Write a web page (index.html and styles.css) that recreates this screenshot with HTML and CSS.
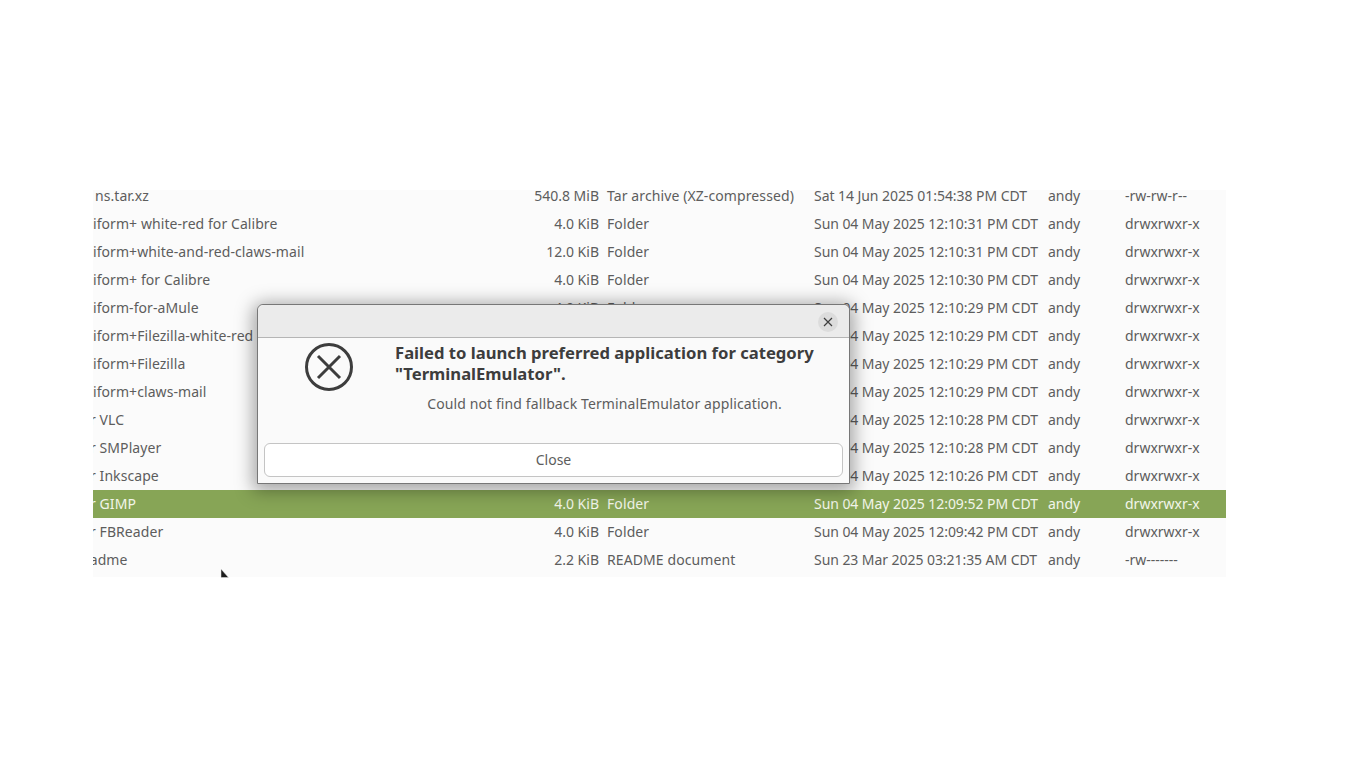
FILE: index.html
```html
<!DOCTYPE html>
<html lang="en">
<head>
<meta charset="utf-8">
<title>Failed to launch</title>
<link rel="stylesheet" href="styles.css">
</head>
<body>
<main class="list">
  <div class="rows">
    <div class="row"><span class="name shift-a">ns.tar.xz</span><span class="size">540.8 MiB</span><span class="type">Tar archive (XZ-compressed)</span><span class="date">Sat 14 Jun 2025 01:54:38 PM CDT</span><span>andy</span><span>-rw-rw-r--</span></div>
    <div class="row"><span class="name">iform+ white-red for Calibre</span><span class="size">4.0 KiB</span><span class="type">Folder</span><span class="date">Sun 04 May 2025 12:10:31 PM CDT</span><span>andy</span><span>drwxrwxr-x</span></div>
    <div class="row"><span class="name">iform+white-and-red-claws-mail</span><span class="size">12.0 KiB</span><span class="type">Folder</span><span class="date">Sun 04 May 2025 12:10:31 PM CDT</span><span>andy</span><span>drwxrwxr-x</span></div>
    <div class="row"><span class="name">iform+ for Calibre</span><span class="size">4.0 KiB</span><span class="type">Folder</span><span class="date">Sun 04 May 2025 12:10:30 PM CDT</span><span>andy</span><span>drwxrwxr-x</span></div>
    <div class="row"><span class="name">iform-for-aMule</span><span class="size">4.0 KiB</span><span class="type">Folder</span><span class="date">Sun 04 May 2025 12:10:29 PM CDT</span><span>andy</span><span>drwxrwxr-x</span></div>
    <div class="row"><span class="name">iform+Filezilla-white-red</span><span class="size">4.0 KiB</span><span class="type">Folder</span><span class="date">Sun 04 May 2025 12:10:29 PM CDT</span><span>andy</span><span>drwxrwxr-x</span></div>
    <div class="row"><span class="name">iform+Filezilla</span><span class="size">4.0 KiB</span><span class="type">Folder</span><span class="date">Sun 04 May 2025 12:10:29 PM CDT</span><span>andy</span><span>drwxrwxr-x</span></div>
    <div class="row"><span class="name">iform+claws-mail</span><span class="size">4.0 KiB</span><span class="type">Folder</span><span class="date">Sun 04 May 2025 12:10:29 PM CDT</span><span>andy</span><span>drwxrwxr-x</span></div>
    <div class="row"><span class="name shift-r">r VLC</span><span class="size">4.0 KiB</span><span class="type">Folder</span><span class="date">Sun 04 May 2025 12:10:28 PM CDT</span><span>andy</span><span>drwxrwxr-x</span></div>
    <div class="row"><span class="name shift-r">r SMPlayer</span><span class="size">4.0 KiB</span><span class="type">Folder</span><span class="date">Sun 04 May 2025 12:10:28 PM CDT</span><span>andy</span><span>drwxrwxr-x</span></div>
    <div class="row"><span class="name shift-r">r Inkscape</span><span class="size">4.0 KiB</span><span class="type">Folder</span><span class="date">Sun 04 May 2025 12:10:26 PM CDT</span><span>andy</span><span>drwxrwxr-x</span></div>
    <div class="row selected"><span class="name shift-r">r GIMP</span><span class="size">4.0 KiB</span><span class="type">Folder</span><span class="date">Sun 04 May 2025 12:09:52 PM CDT</span><span>andy</span><span>drwxrwxr-x</span></div>
    <div class="row"><span class="name shift-r">r FBReader</span><span class="size">4.0 KiB</span><span class="type">Folder</span><span class="date">Sun 04 May 2025 12:09:42 PM CDT</span><span>andy</span><span>drwxrwxr-x</span></div>
    <div class="row"><span class="name shift-d">Readme</span><span class="size">2.2 KiB</span><span class="type">README document</span><span class="date">Sun 23 Mar 2025 03:21:35 AM CDT</span><span>andy</span><span>-rw-------</span></div>
  </div>
</main>
<svg class="cursor" width="10" height="9" viewBox="0 0 10 9" aria-hidden="true"><path d="M1 0v8.5h7.5z" fill="#1c1c1c" stroke="#e4e4e4" stroke-width="0.5"/></svg>
<section class="dialog" role="alertdialog">
  <header class="titlebar">
    <span class="close-x"><svg width="10" height="10" viewBox="0 0 10 10" aria-hidden="true"><path d="M1 1l8 8M9 1l-8 8" stroke="#3d3d3d" stroke-width="1.2" fill="none"/></svg></span>
  </header>
  <div class="body">
    <svg class="error-icon" width="48" height="48" viewBox="0 0 48 48" aria-hidden="true"><circle cx="24" cy="24" r="22.5" fill="none" stroke="#3d3d3d" stroke-width="3"/><path d="M13 13l22 22M35 13L13 35" stroke="#3d3d3d" stroke-width="3" fill="none"/></svg>
    <div class="message">
      <h1>Failed to launch preferred application for category "TerminalEmulator".</h1>
      <p>Could not find fallback TerminalEmulator application.</p>
    </div>
  </div>
  <footer class="actions"><button class="close-btn" type="button">Close</button></footer>
</section>
</body>
</html>
```
FILE: styles.css
```css
html, body { margin: 0; height: 100%; background: #fff; overflow: hidden; }
body { position: relative; font-family: "Noto Sans", sans-serif; font-size: 14px; color: #5d5d5d; }

.list { margin: 190px 0 0 93px; width: 1133px; height: 387px; background: #fbfbfb; overflow: hidden; }
.rows { margin-top: -8px; }
.row { display: grid; grid-template-columns: 420px 86px 215px 234px 77px 1fr; height: 26px; padding-bottom: 2px; align-items: center; white-space: nowrap; }
.row.selected { background: #87a556; color: #f2f5ea; }
.name { overflow: hidden; letter-spacing: .07px; }
.shift-a { padding-left: 2px; }
.shift-r { text-indent: -3px; }
.shift-d { text-indent: -20px; }
.size { text-align: right; }
.type { padding-left: 8px; letter-spacing: .1px; }
.date { letter-spacing: -.06px; }

.cursor { position: absolute; left: 220px; top: 569px; }

.dialog { position: absolute; left: 257px; top: 304px; width: 591px; height: 178px; background: #fafafa; border: 1px solid #777; border-radius: 6px 6px 0 0; box-shadow: 0 3px 18px 4px rgba(0,0,0,.35); display: flex; flex-direction: column; color: #3d3d3d; }
.titlebar { height: 31px; padding-top: 1px; background: #ebebeb; border-bottom: 1px solid #b5b5b5; border-radius: 6px 6px 0 0; display: flex; align-items: center; justify-content: flex-end; padding-right: 11px; flex: none; }
.close-x { width: 20px; height: 20px; border-radius: 50%; background: #dcdcdc; display: flex; align-items: center; justify-content: center; }
.body { display: flex; flex: 1; padding: 5px 20px 0 47px; }
.error-icon { flex: none; margin-right: 42px; }
.message { flex: 1; margin-top: -1px; }
h1 { margin: 0; font-size: 16.65px; line-height: 21px; font-weight: 700; color: #3d3d3d; }
p { margin: 10px 15px 0 0; text-align: center; font-size: 14px; line-height: 20px; letter-spacing: .11px; color: #5d5d5d; }
.actions { padding: 0 6px 6px 6px; flex: none; }
.close-btn { display: block; width: 100%; height: 34px; padding: 0 0 2px; background: #fff; border: 1px solid #c4c4c4; border-radius: 6px; font: inherit; color: #5d5d5d; }
```
